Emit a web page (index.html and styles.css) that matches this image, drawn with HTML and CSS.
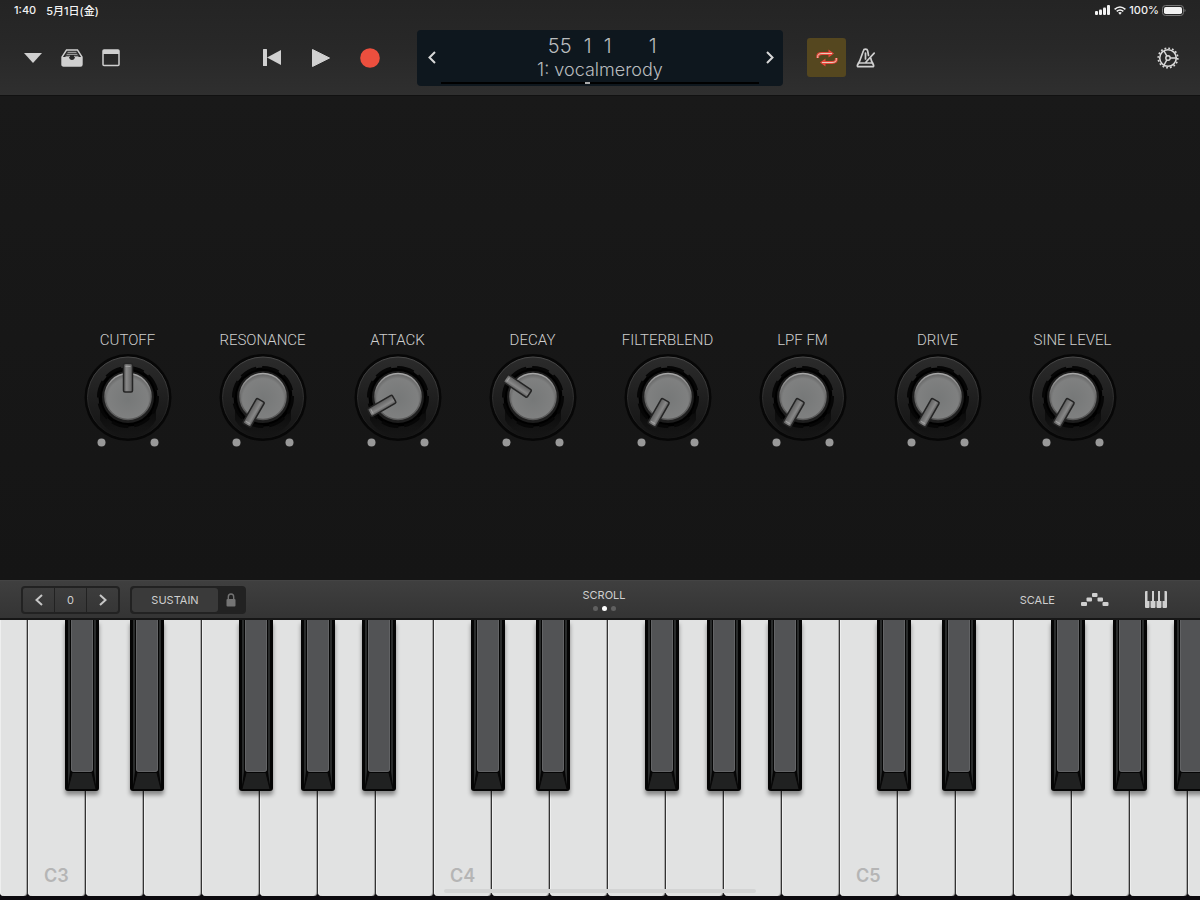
FILE: index.html
```html
<!DOCTYPE html>
<html lang="ja">
<head>
<meta charset="utf-8">
<meta name="viewport" content="width=device-width, initial-scale=1">
<title>Synth keyboard</title>
<link rel="stylesheet" href="styles.css">
</head>
<body>
<header class="top">
  <div class="status">
    <div class="status-side"><span>1:40</span><span>5月1日(金)</span></div>
    <div class="status-side status-right">
      <svg width="16" height="10" viewBox="0 0 16 10" fill="#f2f2f2" aria-hidden="true"><rect x="0" y="6" width="3" height="4" rx="1"/><rect x="4" y="4.500" width="3" height="5.500" rx="1"/><rect x="8" y="2.500" width="3" height="7.500" rx="1"/><rect x="12" y="0" width="3" height="10" rx="1"/></svg>
      <svg width="12" height="9" viewBox="0 0 12 9" fill="none" stroke="#f2f2f2" stroke-width="1.600" aria-hidden="true"><path d="M.6 3.300Q6-1.300 11.400 3.300M2.700 5.400Q6 2.600 9.300 5.400"/><path d="M4.200 6.700Q6 5.500 7.800 6.700L6 8.700z" fill="#f2f2f2" stroke="none"/></svg>
      <span>100%</span>
      <svg width="24" height="11" viewBox="0 0 24 11" aria-hidden="true"><rect x=".5" y=".5" width="21" height="10" rx="3" fill="none" stroke="#777"/><rect x="2" y="2" width="18" height="7" rx="1.800" fill="#f2f2f2"/><path d="M22.500 4v3q1-.4 1-1.500T22.500 4" fill="#777"/></svg>
    </div>
  </div>
  <div class="toolbar">
    <div class="tools">
      <div class="group">
        <button class="tool" aria-label="Tracks menu"><svg width="18" height="10" viewBox="0 0 18 10"><path d="M0 0h18L9 10z" fill="#d0d0d0"/></svg></button>
        <button class="tool" aria-label="Browser"><svg width="22" height="18" viewBox="0 0 22 18"><path d="M5.500 1h11L21 8v7.500q0 1.500-1.500 1.500h-17Q1 17 1 15.500V8z" fill="none" stroke="#d0d0d0" stroke-width="1.400"/><path d="M1 8h7q.5 3 3 3t3-3h7v8q0 1-1.500 1h-17Q1 17 1 16z" fill="#d0d0d0"/><path d="M6.500 3.300h9M5.500 5.300h11M4.500 7.300h4.500M13 7.300h4.500" stroke="#b5b5b5" stroke-width="1"/></svg></button>
        <button class="tool" aria-label="Track view"><svg width="18" height="18" viewBox="0 0 18 18"><rect x="1" y="1" width="16" height="15.500" rx="1" fill="none" stroke="#d0d0d0" stroke-width="1.500"/><path d="M1 1h16v4H1z" fill="#d0d0d0"/></svg></button>
      </div>
      <div class="group transport">
        <button class="tool" aria-label="Go to beginning"><svg width="18" height="17" viewBox="0 0 18 17" fill="#d0d0d0"><rect width="4" height="17" rx=".5"/><path d="M18 1v15L4 8.500z"/></svg></button>
        <button class="tool" aria-label="Play"><svg width="18" height="18" viewBox="0 0 18 18"><path d="M.5.5v17L17.500 9z" fill="#d0d0d0" stroke="#d0d0d0" stroke-linejoin="round"/></svg></button>
        <button class="tool" aria-label="Record"><svg width="20" height="20" viewBox="0 0 20 20"><circle cx="10" cy="10" r="9.800" fill="#ec4f3e"/></svg></button>
      </div>
    </div>
    <div class="lcd">
      <button class="lcd-step" aria-label="Previous"><svg width="8" height="13" viewBox="0 0 8 13"><path d="M7 1L1.500 6.500 7 12"/></svg></button>
      <div class="lcd-main">
        <div class="position"><span>55</span><span>1</span><span>1</span><span class="ticks">1</span></div>
        <div class="track-name">1: vocalmerody</div>
        <div class="timeline"><i class="playhead"></i></div>
      </div>
      <button class="lcd-step" aria-label="Next"><svg width="8" height="13" viewBox="0 0 8 13"><path d="M1 1l5.500 5.500L1 12"/></svg></button>
    </div>
    <div class="tools tools-right">
      <div class="group">
        <button class="tool cycle" aria-label="Cycle"><svg width="22" height="18" viewBox="0 0 22 18"><g fill="none" stroke="#e4483b" stroke-width="2.800"><path d="M1.700 9V7.500Q1.700 4.500 6 4.500h8M20.300 9v1.500q0 3-4.300 3H8"/></g><g fill="#e4483b"><path d="M12.500.5l5.500 4-5.500 4z"/><path d="M9.500 9.500L4 13.500l5.500 4z"/></g><path d="M1.700 9V7.500Q1.700 4.500 6 4.500h10M20.300 9v1.500q0 3-4.300 3H6" fill="none" stroke="#e9c9b8" stroke-width="1"/></svg></button>
        <button class="tool" aria-label="Metronome"><svg width="20" height="20" viewBox="0 0 20 20" fill="none" stroke="#d0d0d0" stroke-width="1.700" stroke-linejoin="round" stroke-linecap="round"><path d="M12.500 7.500L11.700 3Q11.300 1.200 9.500 1.200T7.300 3L3.700 13 1.500 17q-.6 1.700 1 1.700h14q1.600 0 1-1.700L15.500 13l-.8-3"/><path d="M2.500 15h14M9.500 5v6M18.200 5.200L10 14"/></svg></button>
      </div>
      <button class="tool" aria-label="Settings"><svg width="22" height="22" viewBox="0 0 22 22" fill="none" stroke="#d8d8d8"><circle cx="11" cy="11" r="8.300" stroke-width="1.600"/><circle cx="11" cy="11" r="9.800" stroke-width="1.600" stroke-dasharray="1.800 2.048"/><circle cx="11" cy="11" r="2.200" stroke-width="1.400"/><path d="M13.200 11h6M9.900 9.100L7 3.900M9.900 12.900L7 18.100" stroke-width="1.400"/></svg></button>
    </div>
  </div>
</header>

<main class="panel" id="knobs"></main>

<section class="controls" aria-label="Keyboard controls">
  <div class="controls-left">
    <div class="octave">
      <button aria-label="Octave down"><svg width="8" height="12" viewBox="0 0 8 12"><path d="M7 1L1.500 6 7 11"/></svg></button>
      <button aria-label="Octave">0</button>
      <button aria-label="Octave up"><svg width="8" height="12" viewBox="0 0 8 12"><path d="M1 1l5.500 5L1 11"/></svg></button>
    </div>
    <div class="sustain">
      <button class="sustain-main">SUSTAIN</button>
      <button class="sustain-lock" aria-label="Lock sustain"><svg width="10" height="14" viewBox="0 0 10 14"><rect x=".5" y="6" width="9" height="7.500" rx="1" fill="#747474"/><path d="M2.300 6V4Q2.300 1 5 1t2.700 3v2" fill="none" stroke="#747474" stroke-width="1.400"/></svg></button>
    </div>
  </div>
  <button class="scroll-mode">SCROLL<span class="dots"><i></i><i class="on"></i><i></i></span></button>
  <div class="controls-right">
    <button class="plain">SCALE</button>
    <button class="plain" aria-label="Arpeggiator"><svg width="28" height="13" viewBox="0 0 28 13" fill="#cfcfcf"><rect x="0" y="9" width="6" height="4" rx="1"/><rect x="5.500" y="4.500" width="5.500" height="4" rx="1"/><rect x="11" y="0" width="5.500" height="4" rx="1"/><rect x="16.500" y="4.500" width="5.500" height="4" rx="1"/><rect x="21.500" y="9" width="6" height="4" rx="1"/></svg></button>
    <button class="plain" aria-label="Keyboard layout"><svg width="22" height="17" viewBox="0 0 22 17" fill="#cfcfcf"><path d="M0 1q0-1 1-1h1.500v10H4.500v6q0 1-1 1H1q-1 0-1-1zM7 0h2v10h1.500v6q0 1-1 1h-3q-1 0-1-1v-6H7zM13 0h2v10h1.500v6q0 1-1 1h-3q-1 0-1-1v-6H13zM19.500 0H21q1 0 1 1v15q0 1-1 1h-2.500q-1 0-1-1v-6h2z"/></svg></button>
  </div>
</section>

<section class="keyboard" id="keyboard" aria-label="Keyboard"></section>
<div class="home-bar"></div>

<svg class="defs" width="0" height="0" aria-hidden="true">
  <defs>
    <linearGradient id="ring" x1="0" y1="0" x2="0" y2="1"><stop offset="0" stop-color="#2b2b2b"/><stop offset=".5" stop-color="#1f1f1f"/><stop offset="1" stop-color="#141414"/></linearGradient>
    <linearGradient id="rim" x1="0" y1="0" x2="0" y2="1"><stop offset="0" stop-color="#4a4a4a"/><stop offset=".6" stop-color="#292929"/><stop offset="1" stop-color="#161616"/></linearGradient>
    <linearGradient id="shade" x1="0" y1="0" x2="0" y2="1"><stop offset="0" stop-color="#000" stop-opacity=".85"/><stop offset="1" stop-color="#000" stop-opacity="0"/></linearGradient>
    <radialGradient id="cap" cx=".5" cy=".55" r=".55"><stop offset="0" stop-color="#767878"/><stop offset=".8" stop-color="#7f8080"/><stop offset="1" stop-color="#626262"/></radialGradient>
    <linearGradient id="edge" x1="0" y1="0" x2="0" y2="1"><stop offset="0" stop-color="#a6a6a6"/><stop offset=".5" stop-color="#686868"/><stop offset="1" stop-color="#565656"/></linearGradient>
    <linearGradient id="pointer" x1="0" y1="0" x2="1" y2="0"><stop offset="0" stop-color="#555"/><stop offset=".35" stop-color="#888"/><stop offset="1" stop-color="#5e5e5e"/></linearGradient>
  </defs>
</svg>
<script src="app.js"></script>
</body>
</html>
```
FILE: styles.css
```css
* { box-sizing: border-box; }
body {
  margin: 0;
  min-height: 100vh;
  display: flex;
  flex-direction: column;
  position: relative;
  overflow-x: hidden;
  background: #171717;
  color: #cfcfcf;
  font-family: Inter, "Noto Sans CJK JP", sans-serif;
}
button {
  margin: 0;
  padding: 0;
  border: 0;
  background: none;
  color: inherit;
  font: inherit;
  cursor: pointer;
}
svg { display: block; }
.defs { position: absolute; }

.top {
  background: linear-gradient(#242424, #282828 50%, #2f2f2f);
  border-bottom: 1px solid #111;
}
.status {
  display: flex;
  justify-content: space-between;
  height: 20px;
  padding: 0 14px;
  color: #f2f2f2;
  font-size: 11px;
  font-weight: 500;
}
.status-side { display: flex; align-items: center; gap: 10px; }
.status-right { gap: 3px; }

.toolbar {
  display: grid;
  grid-template-columns: 1fr minmax(280px, 366px) 1fr;
  align-items: center;
  height: 75px;
}
.tools {
  display: flex;
  justify-content: space-between;
  padding: 0 28px 0 13px;
}
.tools-right { padding: 0 13px 0 24px; }
.group { display: flex; }
.transport { gap: 10px; }
.tool {
  display: grid;
  place-items: center;
  width: 39px;
  height: 39px;
}
.cycle { background: #55471f; border-radius: 3px; }

.lcd {
  display: flex;
  align-items: center;
  height: 56px;
  border-radius: 4px;
  background: #0e171e;
  color: #b9bcbe;
}
.lcd-step {
  display: grid;
  place-items: center;
  width: 24px;
  height: 40px;
  padding-left: 6px;
}
.lcd-step:last-child { padding: 0 2px 0 0; }
.lcd-step path { fill: none; stroke: #d8d8d8; stroke-width: 2; }
.lcd-main {
  flex: 1;
  font-size: 18px;
  font-weight: 300;
  line-height: 24px;
  padding-top: 2px;
}
.position { display: flex; justify-content: center; font-size: 20px; }
.position span { width: 20px; text-align: right; }
.position span:first-child { width: 28px; }
.position .ticks { width: 45px; }
.track-name { text-align: center; }
.timeline { display: flex; justify-content: center; height: 2px; background: #000; }
.playhead { width: 5px; height: 2px; margin-right: 26px; background: #aaa; }

.panel {
  flex: 1;
  display: grid;
  grid-template-columns: repeat(8, 1fr);
  align-items: center;
  padding: 102px 60px 0;
  background: linear-gradient(#191919, #151515);
}
.knob {
  position: relative;
  display: flex;
  flex-direction: column;
  align-items: center;
  gap: 4px;
  font: 300 15px/20px Roboto, sans-serif;
  white-space: nowrap;
}
.knob input {
  position: absolute;
  inset: 24px 0 0;
  width: 100%;
  height: 94px;
  margin: 0;
  opacity: 0;
  cursor: pointer;
}

.controls {
  display: grid;
  grid-template-columns: 1fr auto 1fr;
  align-items: center;
  height: 40px;
  padding: 0 33px 0 21px;
  background: linear-gradient(#3f3f3f, #343434);
  border-top: 1px solid #444;
  border-bottom: 2px solid #161616;
  font-size: 11px;
}
.controls-left { display: flex; gap: 10px; }
.octave, .sustain {
  display: flex;
  height: 28px;
  border: 2px solid #222;
  border-radius: 4px;
  overflow: hidden;
}
.octave button {
  display: grid;
  place-items: center;
  width: 31px;
}
.octave button + button { width: 32px; border-left: 1px solid #222; }
.octave path { fill: none; stroke: #c6c6c6; stroke-width: 2; }
.sustain { background: #222; }
.sustain-main { width: 86px; background: #3a3a3a; border-radius: 3px; }
.sustain-lock { display: grid; place-items: center; width: 26px; }
.scroll-mode {
  display: flex;
  flex-direction: column;
  align-items: center;
  gap: 4px;
  margin-left: 20px;
  line-height: 14px;
}
.dots { display: flex; gap: 4px; }
.dots i { width: 5px; height: 5px; border-radius: 50%; background: #606060; }
.dots .on { background: #fff; }
.controls-right {
  display: flex;
  justify-content: flex-end;
  align-items: center;
  gap: 36px;
}
.plain:first-child { margin-right: -10px; }

.keyboard {
  display: flex;
  height: 280px;
  padding-bottom: 4px;
  background: #0c0a0e;
  overflow: hidden;
}
.slot { position: relative; flex: 58 1 0; min-width: 0; }
.slot.first { flex-grow: 28; }
.slot.last { flex-grow: 12; }
.white {
  display: flex;
  align-items: flex-end;
  width: 100%;
  height: 100%;
  padding: 0 0 10px 16px;
  border: solid #333;
  border-width: 0 1px 0 0;
  border-radius: 0 0 4px 4px;
  background: #e1e2e2;
  box-shadow: inset 1px 0 #eeefef, inset -1px 0 #a8a8a8;
  color: #b5b5b5;
  font-size: 18px;
  font-weight: 600;
}
.black {
  position: absolute;
  z-index: 1;
  top: 0;
  width: 34px;
  height: 171px;
  filter: drop-shadow(0 4px 2px #0006);
}
.black.low { left: 64%; }
.black.mid { left: 71%; }
.black.high { left: 76%; }

.home-bar {
  position: absolute;
  z-index: 2;
  bottom: 7px;
  left: 37%;
  right: 37%;
  height: 4px;
  border-radius: 2px;
  background: #d3d4d4;
}
```
FILE: app.js
```js
const knobs = [
  ["CUTOFF", 0],
  ["RESONANCE", 210],
  ["ATTACK", 240],
  ["DECAY", 304],
  ["FILTERBLEND", 210],
  ["LPF FM", 210],
  ["DRIVE", 210],
  ["SINE LEVEL", 210]
];

document.getElementById("knobs").innerHTML = knobs.map(([name, angle]) => `
  <label class="knob">${name}
    <svg width="90" height="94" viewBox="0 0 90 94" aria-hidden="true">
      <circle cx="45" cy="43.5" r="43.500" fill="#070707"/>
      <circle cx="45" cy="43.5" r="40.500" fill="url(#ring)" stroke="url(#rim)"/>
      <path d="M17 48v18q8 15 28 15t28-15V48z" fill="url(#shade)"/>
      <circle cx="45" cy="43" r="29.500" fill="#000" stroke="#060606" stroke-width="3" stroke-dasharray="17 6"/>
      <circle cx="45" cy="43" r="26" fill="#1d1d1d"/>
      <circle cx="45" cy="42.500" r="23" fill="url(#cap)" stroke="url(#edge)" stroke-width="1.500"/>
      <g transform="rotate(${angle} 45 42.500)">
        <rect x="40.500" y="9.500" width="9" height="28.500" rx="1.500" fill="url(#pointer)" stroke="#242424" stroke-width="1.500"/>
        <path d="M42.500 12.500h5" stroke="#a0a0a0"/>
      </g>
      <circle cx="18.500" cy="88.500" r="4" fill="#999"/>
      <circle cx="71.500" cy="88.500" r="4" fill="#999"/>
    </svg>
    <input type="range" min="0" max="360" value="${angle}">
  </label>`).join("");

const blackKey = `<svg width="34" height="171" viewBox="0 0 34 171" aria-hidden="true">
  <path d="M0 0h34v168q0 3-3 3H3q-3 0-3-3z" fill="#050505"/>
  <path d="M3 0h2v152L3 166zM29 0h2v166l-2-14z" fill="#292b2b"/>
  <path d="M7 153h20l4 16H3z" fill="#202121"/>
  <path d="M7 153L3 169M27 153l4 16" stroke="#080808"/>
  <path d="M6 0h22v149q0 3-3 3H9q-3 0-3-3z" fill="#525355"/>
  <path d="M6.500 0v149q0 2.500 2.500 2.500h16q2.500 0 2.500-2.500V0" fill="none" stroke="#626365"/>
</svg>`;

const notes = ["C", "D", "E", "F", "G", "A", "B"];
const blackSide = { C: "low", D: "high", F: "low", G: "mid", A: "high" };
const count = 22;
let html = "";
for (let i = 0; i < count; i++) {
  const note = notes[(i + 6) % 7];
  const octave = 2 + Math.floor((i + 6) / 7);
  const edge = i === 0 ? " first" : i === count - 1 ? " last" : "";
  const side = blackSide[note];
  html += `<div class="slot${edge}">
    <button class="white" aria-label="${note}${octave}">${note === "C" ? note + octave : ""}</button>
    ${side ? `<button class="black ${side}" aria-label="${note} sharp ${octave}">${blackKey}</button>` : ""}
  </div>`;
}
document.getElementById("keyboard").innerHTML = html;
```
